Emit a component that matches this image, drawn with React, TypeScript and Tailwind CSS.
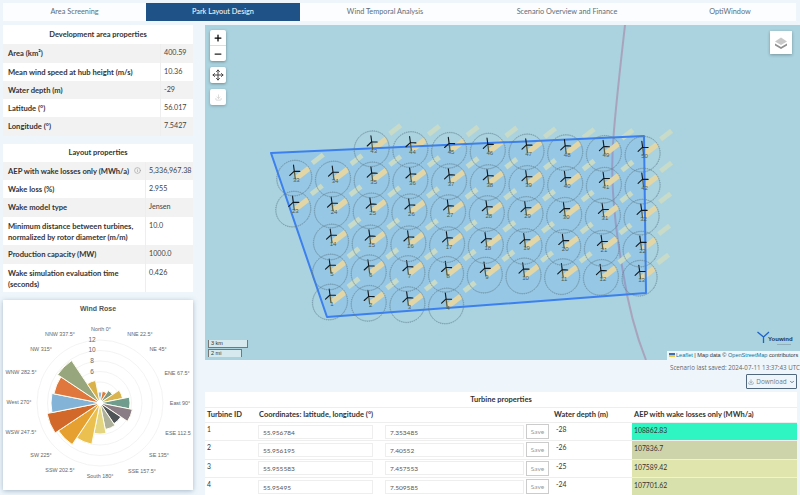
import React from "react";
import { Move, Plus, Minus, Download, Info, ChevronDown } from "lucide-react";

interface PropRow {
  label: React.ReactNode;
  value: string;
  height: string;
  info?: boolean;
}

const areaRows: PropRow[] = [
  { label: "Area (km²)", value: "400.59", height: "h-[19px]" },
  { label: "Mean wind speed at hub height (m/s)", value: "10.36", height: "h-[18px]" },
  { label: "Water depth (m)", value: "-29", height: "h-[18px]" },
  { label: "Latitude (°)", value: "56.017", height: "h-[18px]" },
  { label: "Longitude (°)", value: "7.5427", height: "h-[19px]" },
];

const layoutRows: PropRow[] = [
  { label: "AEP with wake losses only (MWh/a)", value: "5,336,967.38", height: "h-[18px]", info: true },
  { label: "Wake loss (%)", value: "2.955", height: "h-[18px]" },
  { label: "Wake model type", value: "Jensen", height: "h-[19px]" },
  { label: "Minimum distance between turbines, normalized by rotor diameter (m/m)", value: "10.0", height: "h-[28px]" },
  { label: "Production capacity (MW)", value: "1000.0", height: "h-[19px]" },
  { label: "Wake simulation evaluation time (seconds)", value: "0.426", height: "h-[28px]" },
];

// Each row of turbines: first number, column range, hub position and slope
const turbineRows = [
  { start: 1, from: 0, to: 3, x0: 330, y0: 295, dy: 0.034 },
  { start: 5, from: 0, to: 8, x0: 330, y0: 265, dy: 0.02 },
  { start: 14, from: 0, to: 8, x0: 331, y0: 235, dy: 0.023 },
  { start: 23, from: -1, to: 8, x0: 332, y0: 203, dy: 0.023 },
  { start: 33, from: -1, to: 8, x0: 333, y0: 172, dy: 0.023 },
  { start: 43, from: 1, to: 8, x0: 333, y0: 141, dy: 0.02 },
];

const turbines = turbineRows.flatMap((row) => {
  const list: { id: number; x: number; y: number }[] = [];
  for (let c = row.from; c <= row.to; c++) {
    const x = row.x0 + c * 38.7;
    list.push({ id: row.start + c - row.from, x, y: row.y0 + (x - row.x0) * row.dy });
  }
  return list;
});

const roseBars = [
  { angle: 0, r: 11, color: "#8dbbdb" },
  { angle: 22.5, r: 12, color: "#e07b3e" },
  { angle: 45, r: 15, color: "#7f9a80" },
  { angle: 67.5, r: 23, color: "#d9b44f" },
  { angle: 90, r: 30, color: "#6f9c8c" },
  { angle: 112.5, r: 33, color: "#8a7d85" },
  { angle: 135, r: 25, color: "#4f5458" },
  { angle: 157.5, r: 27, color: "#adb09a" },
  { angle: 180, r: 31, color: "#e4d680" },
  { angle: 202.5, r: 42, color: "#ecc04e" },
  { angle: 225, r: 50, color: "#e5a030" },
  { angle: 247.5, r: 54, color: "#d2692a" },
  { angle: 270, r: 49, color: "#84b3d8" },
  { angle: 292.5, r: 47, color: "#e0773c" },
  { angle: 315, r: 51, color: "#98a67e" },
  { angle: 337.5, r: 23, color: "#d9b24a" },
];

const roseLabels = [
  { t: "North 0°", x: 101, y: 329 },
  { t: "NNE 22.5°", x: 140, y: 334 },
  { t: "NE 45°", x: 158, y: 349 },
  { t: "ENE 67.5°", x: 177, y: 373 },
  { t: "East 90°", x: 180, y: 403 },
  { t: "ESE 112.5", x: 178, y: 433 },
  { t: "SE 135°", x: 159, y: 455 },
  { t: "SSE 157.5°", x: 142, y: 471 },
  { t: "South 180°", x: 100, y: 476 },
  { t: "SSW 202.5°", x: 60, y: 470 },
  { t: "SW 225°", x: 41, y: 455 },
  { t: "WSW 247.5°", x: 21, y: 432 },
  { t: "West 270°", x: 19, y: 402 },
  { t: "WNW 282.5°", x: 21, y: 372 },
  { t: "NW 315°", x: 41, y: 349 },
  { t: "NNW 337.5°", x: 60, y: 334 },
];

const turbineTable = [
  { id: 1, lat: "55.956784", lon: "7.353485", depth: "-28", aep: "108862.83", bg: "bg-[#2ff5c2]" },
  { id: 2, lat: "55.956195", lon: "7.40552", depth: "-26", aep: "107836.7", bg: "bg-[#ced4a9]" },
  { id: 3, lat: "55.955583", lon: "7.457553", depth: "-25", aep: "107589.42", bg: "bg-[#e0e4ad]" },
  { id: 4, lat: "55.95495", lon: "7.509585", depth: "-24", aep: "107701.62", bg: "bg-[#d8e0ab]" },
];

const polar = (r: number, deg: number, cx: number, cy: number) => {
  const a = (deg * Math.PI) / 180;
  return [cx + r * Math.sin(a), cy - r * Math.cos(a)];
};

const sector = (r: number, angle: number, cx: number, cy: number) => {
  const [x1, y1] = polar(r, angle - 11.25, cx, cy);
  const [x2, y2] = polar(r, angle + 11.25, cx, cy);
  return `M${cx} ${cy}L${x1} ${y1}A${r} ${r} 0 0 1 ${x2} ${y2}Z`;
};

const PropTable = ({ title, rows, valueWidth, titleHeight }: { title: string; rows: PropRow[]; valueWidth: string; titleHeight: string }) => (
  <div className="bg-white text-[#333] text-[7.6px]">
    <div className={`${titleHeight} flex items-center justify-center font-bold text-[7.5px]`}>{title}</div>
    {rows.map((row, i) => (
      <div key={i} className={`${row.height} flex ${i % 2 === 0 ? "bg-[#f2f2f2]" : "bg-white"}`}>
        <div className="flex-1 pl-[5px] pr-[3px] pt-[4px] font-bold leading-[10.5px] flex justify-between items-start">
          <span>{row.label}</span>
          {row.info && <Info className="w-[7px] h-[7px] mt-[1px] mr-[1px] text-[#999]" />}
        </div>
        <div className={`${valueWidth} border-l border-[#eeeeee] pl-[3px] pt-[4px] leading-[10.5px] text-[7.2px] text-[#444]`}>{row.value}</div>
      </div>
    ))}
  </div>
);

const WindRose = () => (
  <div className="mt-[8px] mb-[5px] h-[190px] bg-white shadow-[0_1px_5px_rgba(80,110,140,0.45)]">
    <svg viewBox="3 300 190 190" className="w-full h-full">
      <text x="98" y="311" textAnchor="middle" fontSize="7" fontWeight="700" fill="#555" fontFamily="Liberation Sans, sans-serif">Wind Rose</text>
      {[10.5, 21, 31.5, 42, 52.5, 63].map((r) => (
        <circle key={r} cx="100" cy="403" r={r} fill="none" stroke="#f0f0f0" strokeWidth="0.8" />
      ))}
      {roseBars.map((b) => (
        <path key={b.angle} d={sector(b.r, b.angle, 100, 403)} fill={b.color} stroke="#fffdf0" strokeWidth="1" />
      ))}
      <circle cx="100" cy="403" r="3" fill="#fff" />
      {[{ t: "12", y: 340 }, { t: "10", y: 350 }, { t: "8", y: 361 }, { t: "6", y: 372 }].map((l) => (
        <text key={l.t} x="92" y={l.y + 2} textAnchor="middle" fontSize="6.5" fill="#666" fontFamily="Liberation Sans, sans-serif">{l.t}</text>
      ))}
      {roseLabels.map((l) => (
        <text key={l.t} x={l.x} y={l.y + 2} textAnchor="middle" fontSize="5.4" fill="#666" fontFamily="Liberation Sans, sans-serif">{l.t}</text>
      ))}
    </svg>
  </div>
);

const MapDrawing = () => (
  <svg viewBox="205 25 595 335" className="absolute inset-0 w-full h-full">
    <path d="M625 25C621 60 617 95 614 130C612 150 612 175 613 192C615 225 619 250 623 272C627 298 634 330 646 360" fill="none" stroke="#a9a4bd" strokeWidth="2" />
    <polygon points="271,153 644,136 646,293 327,317" fill="#3388ff" fillOpacity="0.16" />
    {turbines.map((t) => (
      <g key={`w${t.id}`}>
        <line x1={t.x + 18} y1={t.y - 8} x2={t.x + 29} y2={t.y - 16.5} stroke="#c8dac8" strokeWidth="5" />
        <line x1={t.x + 2} y1={t.y + 7} x2={t.x + 15} y2={t.y - 3} stroke="#e2d6a6" strokeWidth="5.5" />
      </g>
    ))}
    <polygon points="271,153 644,136 646,293 327,317" fill="none" stroke="#3b80ee" strokeWidth="2" strokeLinejoin="round" />
    {turbines.map((t) => (
      <g key={t.id}>
        <ellipse cx={t.x} cy={t.y + 7} rx="17" ry="18" transform={`rotate(35 ${t.x} ${t.y + 7})`} fill="none" stroke="#64828f" strokeOpacity="0.45" strokeWidth="0.7" />
        <ellipse cx={t.x} cy={t.y + 7} rx="17.4" ry="18.3" transform={`rotate(35 ${t.x} ${t.y + 7})`} fill="none" stroke="#5d7b92" strokeOpacity="0.7" strokeWidth="0.7" strokeDasharray="1 1.2" />
        <line x1={t.x} y1={t.y} x2={t.x + 1} y2={t.y + 8} stroke="#5a5a3a" strokeWidth="1.2" />
        <path d={`M${t.x} ${t.y}L${t.x - 0.8} ${t.y - 6}M${t.x} ${t.y}L${t.x + 5.5} ${t.y + 0.3}M${t.x} ${t.y}L${t.x - 4.5} ${t.y + 4.2}`} stroke="#101820" strokeWidth="1.1" strokeLinecap="round" />
        <text x={t.x + 2} y={t.y + 11} textAnchor="middle" fontSize="6" fill="#4d5b50" fontFamily="Liberation Sans, sans-serif">{t.id}</text>
      </g>
    ))}
    {/* logo */}
    <path d="M757.5 332L763.5 337V343M769 332L763.5 337" fill="none" stroke="#1f63c8" strokeWidth="1.3" />
    <text x="768" y="341" fontSize="6" fontWeight="700" fill="#1d3557" fontFamily="Liberation Sans, sans-serif">Youwind</text>
    <line x1="777" y1="344.5" x2="791" y2="344.5" stroke="#8aa4b4" strokeWidth="0.8" />
  </svg>
);

const MapPanel = () => (
  <div className="relative h-[335px] bg-[#aad3df] overflow-hidden">
    <MapDrawing />
    <div className="absolute left-[5px] top-[5px] w-[16px] bg-white rounded-[2px] shadow-[0_1px_3px_rgba(0,0,0,0.35)]">
      <div className="h-[16px] flex items-center justify-center border-b border-[#ddd]">
        <Plus className="w-[10px] h-[10px] text-black" strokeWidth={3} />
      </div>
      <div className="h-[15px] flex items-center justify-center">
        <Minus className="w-[10px] h-[10px] text-[#222]" strokeWidth={3} />
      </div>
    </div>
    <div className="absolute left-[5px] top-[42px] w-[16px] h-[16px] bg-white rounded-[2px] shadow-[0_1px_3px_rgba(0,0,0,0.35)] flex items-center justify-center">
      <Move className="w-[12px] h-[12px] text-[#444]" strokeWidth={2} />
    </div>
    <div className="absolute left-[5px] top-[64px] w-[16px] h-[16px] bg-white rounded-[2px] shadow-[0_1px_3px_rgba(0,0,0,0.25)] flex items-center justify-center">
      <Download className="w-[7px] h-[7px] text-[#c4c4c4]" />
    </div>
    <div className="absolute right-[8px] top-[6px] w-[22px] h-[23px] bg-white shadow-[0_1px_3px_rgba(0,0,0,0.3)] flex items-center justify-center">
      <svg viewBox="0 0 16 16" className="w-[16px] h-[16px]">
        <path d="M8 2.5L14 6.5L8 10L2 6.5Z" fill="#c9c9c9" />
        <path d="M2 8.5L8 12L14 8.5V10.5L8 14L2 10.5Z" fill="#8f8f8f" />
      </svg>
    </div>
    <div className="absolute left-[3px] bottom-[3px] w-[40px] text-[5.5px] leading-[7px] text-[#333] font-['Liberation_Sans',sans-serif]">
      <div className="h-[8px] border border-t-0 border-[#777] bg-white/50 pl-[2px] mb-[1px]">3 km</div>
      <div className="h-[8px] w-[34px] border border-b-0 border-[#777] bg-white/50 pl-[2px]">2 mi</div>
    </div>
    <div className="absolute right-0 bottom-0 h-[9px] w-[133px] bg-white/80 pl-[2px] text-[5.6px] leading-[9px] text-[#333] whitespace-nowrap font-['Liberation_Sans',sans-serif]">
      <span className="inline-block w-[6px] h-[4px] bg-[#e8c94a] border-t-2 border-[#3d6fb0] mr-[1px]" />
      <span className="text-[#0078a8]">Leaflet</span> | Map data © <span className="text-[#0078a8]">OpenStreetMap</span> contributors
    </div>
  </div>
);

const TurbineTable = () => (
  <div className="mt-[3px] bg-white flex-1 overflow-hidden text-[7.5px] text-[#333]">
    <div className="h-[16px] flex items-center justify-center font-bold border-b border-[#eee]">Turbine properties</div>
    <div className="h-[14px] flex font-bold items-center">
      <div className="w-[51px] pl-[2px]">Turbine ID</div>
      <div className="w-[297px] pl-[3px]">Coordinates: latitude, longitude (°)</div>
      <div className="w-[79px] pl-[1px]">Water depth (m)</div>
      <div className="flex-1 pl-[2px]">AEP with wake losses only (MWh/a)</div>
    </div>
    {turbineTable.map((row) => (
      <div key={row.id} className="h-[18.3px] flex border-t border-[#eee] text-[6.8px]">
        <div className="w-[51px] pl-[2px] pt-[1px]">{row.id}</div>
        <div className="w-[297px] flex items-center pl-[2px]">
          <div className="w-[115px] h-[14px] border border-[#eee] pl-[4px] leading-[13px] text-[#555] text-[6.5px]">{row.lat}</div>
          <div className="w-[139px] h-[14px] ml-[12px] border border-[#eee] pl-[4px] leading-[13px] text-[#555] text-[6.5px]">{row.lon}</div>
          <div className="w-[23px] h-[15px] ml-[2px] border border-[#ccc] text-center leading-[14px] text-[#999] text-[6.5px]">Save</div>
        </div>
        <div className="w-[79px] pl-[3px] pt-[1px]">{row.depth}</div>
        <div className={`flex-1 ${row.bg} pl-[2px] pt-[2px]`}>{row.aep}</div>
      </div>
    ))}
  </div>
);

export default function App() {
  const tabs = [
    { label: "Area Screening", w: "w-[143px]" },
    { label: "Park Layout Design", w: "w-[154px]", active: true },
    { label: "Wind Temporal Analysis", w: "w-[170px]" },
    { label: "Scenario Overview and Finance", w: "w-[194px]" },
    { label: "OptiWindow", w: "w-[132px]" },
  ];
  return (
    <div className="w-[800px] h-[495px] overflow-hidden bg-[#eef6fb] font-['Lato',sans-serif] flex flex-col">
      <div className="h-[25px] pt-[3px] pl-[3px] flex shrink-0">
        {tabs.map((tab) => (
          <div
            key={tab.label}
            className={`${tab.w} h-[18px] flex items-center justify-center text-[7.3px] ${tab.active ? "bg-[#1f5387] text-white" : "bg-[#fbfdfe] text-[#5d6d7a]"}`}
          >
            {tab.label}
          </div>
        ))}
      </div>
      <div className="flex flex-1 min-h-0">
        <div className="w-[190px] ml-[3px] shrink-0 flex flex-col">
          <PropTable title="Development area properties" rows={areaRows} valueWidth="w-[33px]" titleHeight="h-[19px]" />
          <div className="h-[9px]" />
          <PropTable title="Layout properties" rows={layoutRows} valueWidth="w-[48px]" titleHeight="h-[18px]" />
          <WindRose />
        </div>
        <div className="flex-1 ml-[12px] flex flex-col min-w-0">
          <MapPanel />
          <div className="h-[14px] pt-[2px] text-right text-[6.2px] leading-[11px] text-[#666] whitespace-nowrap font-['Open_Sans',sans-serif]">
            Scenario last saved: 2024-07-11 13:37:43 UTC
          </div>
          <div className="h-[15px] flex justify-end pr-[3px]">
            <div className="w-[51px] border border-[#50677d] rounded-[1px] flex items-center justify-center gap-[2px] text-[6.4px] text-[#6b7c8a] font-['Open_Sans',sans-serif]">
              <Download className="w-[6px] h-[6px]" />
              Download
              <ChevronDown className="w-[6px] h-[6px]" strokeWidth={4} />
            </div>
          </div>
          <div className="mr-[3px] flex-1 flex flex-col min-h-0">
            <TurbineTable />
          </div>
        </div>
      </div>
    </div>
  );
}
